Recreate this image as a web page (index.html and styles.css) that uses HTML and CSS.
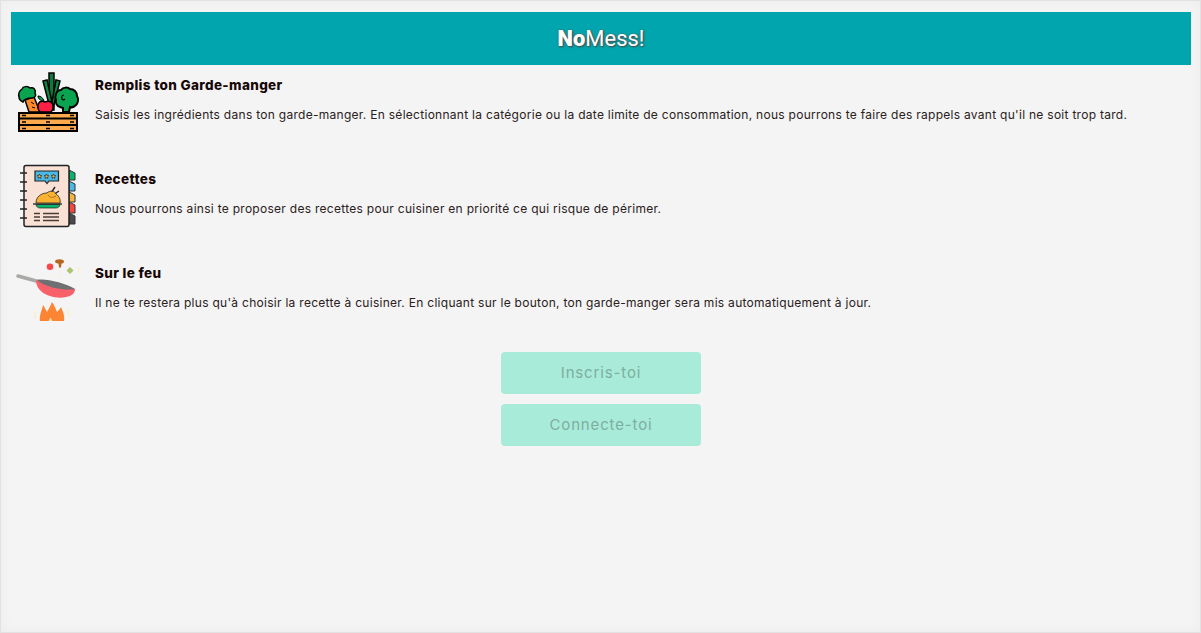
FILE: index.html
```html
<!DOCTYPE html>
<html lang="fr">

<head>
    <meta charset="utf-8">
    <meta name="viewport" content="width=device-width, initial-scale=1.0">

    <title>NoMess!</title>

    <link rel="stylesheet" href="styles.css">

</head>

<body>
    <main class="cadre">
        <header class="entete">
            <h1><b>No</b>Mess!</h1>
        </header>

        <section class="etapes">
            <article class="etape">
                <svg class="icone" viewBox="16 70 64 64">
                    <!-- poireau -->
                    <path d="M49 110V73h5v37z" fill="#0d7a3e" stroke="#000" stroke-width="1.5"/>
                    <path d="M50 108L43 81l4-1 5 22M53 108l7-27-4-1-4 22" fill="#0a8c46" stroke="#000" stroke-width="1.5"/>
                    <!-- carotte -->
                    <path d="M25 100l9-3 6 15H29z" fill="#ff8a2b" stroke="#000" stroke-width="1.5"/>
                    <path d="M19 97c-1-4 0-6 3-8 1-3 6-3 8-1 4-1 6 2 5 5 2 3-1 5-3 5-4 0-8 1-9 4-2-1-4-3-4-5z" fill="#0aa350" stroke="#000" stroke-width="1.500"/>
                    <path d="M31 102l3 2M32 107l3 1" stroke="#000" stroke-width="1" fill="none"/>
                    <!-- pomme -->
                    <path d="M45 102c4-2 8 0 8 4 0 3-1 6-3 6H41c-2 0-3-3-3-6 0-4 3-6 7-4z" fill="#ff1f46" stroke="#000" stroke-width="1.500"/>
                    <path d="M44 101c-1-3-3-5-6-5 0 3 3 5 6 5z" fill="#0aa350" stroke="#000" stroke-width="1"/>
                    <!-- brocoli -->
                    <path d="M63 112v-4l-3-1c-3-1-5-4-4-7-1-2-1-4 0-6 1-3 3-4 5-4 2-3 7-3 9-1 4 0 7 3 7 7 2 3 1 7-1 9-2 2-4 3-6 2l-1 5z" fill="#0aa350" stroke="#000" stroke-width="2"/>
                    <path d="M64 95c-2 0-3 2-2 4 1 1 2 1 3 0" stroke="#000" stroke-width="1.200" fill="none"/>
                    <!-- cagette -->
                    <path d="M19 113h58v18H19z" fill="#ffa94d" stroke="#000" stroke-width="2"/>
                    <path d="M19 118.500h58M19 125h58" stroke="#000" stroke-width="2"/>
                    <path d="M22 115.500h4M46 115.500h4M70 115.500h4M22 122h4M46 122h4M70 122h4M22 128.500h4M46 128.500h4M70 128.500h4" stroke="#000" stroke-width="1.600"/>
                </svg>
                <div class="texte">
                    <h2>Remplis ton Garde-manger</h2>
                    <p>Saisis les ingrédients dans ton garde-manger. En sélectionnant la catégorie ou la date limite de consommation, nous pourrons te faire des rappels avant qu'il ne soit trop tard.</p>
                </div>
            </article>

            <article class="etape">
                <svg class="icone" viewBox="16 164 64 64">
                    <!-- onglets -->
                    <path d="M69 170l6 3v7l-6 0z" fill="#0cb36b" stroke="#333" stroke-width="1"/>
                    <path d="M69 181l6 3v7l-6 0z" fill="#4cb8e6" stroke="#333" stroke-width="1"/>
                    <path d="M69 192l6 3v7l-6 0z" fill="#f5b342" stroke="#333" stroke-width="1"/>
                    <path d="M69 202l6 3v8l-6 0z" fill="#f5483f" stroke="#333" stroke-width="1"/>
                    <path d="M69 213l6 3v8l-6 0z" fill="#4a4a4a" stroke="#333" stroke-width="1"/>
                    <!-- carnet -->
                    <rect x="24" y="165.500" width="45" height="61" rx="2" fill="#f9e1d6" stroke="#222" stroke-width="1.500"/>
                    <path d="M20 173h7M20 182h7M20 191h7M20 200h7M20 209h7M20 218h7" stroke="#222" stroke-width="1.300"/>
                    <!-- bulle -->
                    <path d="M35 171h23.500v10h-9.500l-2 2.500-2-2.500H35z" fill="#4cb8e6" stroke="#222" stroke-width="1.200"/>
                    <path d="M39.500 174l.7 1.500 1.600.2-1.200 1.100.3 1.600-1.400-.8-1.400.8.300-1.600-1.200-1.100 1.600-.2zM46.500 174l.7 1.500 1.600.2-1.200 1.100.3 1.600-1.400-.8-1.400.8.300-1.600-1.200-1.100 1.600-.2zM53.500 174l.7 1.500 1.600.2-1.200 1.100.3 1.600-1.400-.8-1.400.8.300-1.600-1.200-1.100 1.600-.2z" fill="#f5b342" stroke="#222" stroke-width=".7"/>
                    <!-- poulet -->
                    <path d="M51 193l4-6M53 195l6-4" stroke="#222" stroke-width="1.400" fill="none"/>
                    <path d="M36 203c0-6 5-10 11-10 3-3 8-2 9 1 3 2 5 6 4 9z" fill="#f9b233" stroke="#222" stroke-width=".8"/>
                    <path d="M48 195c2 3 5 3 8 1" stroke="#a8701a" stroke-width="1" fill="none"/>
                    <path d="M36 204.500h24c0 2-2 3.500-4 3.500H40c-2 0-4-1.500-4-3.500z" fill="#0cb36b" stroke="#222" stroke-width=".7"/>
                    <path d="M33 204h29" stroke="#222" stroke-width="1.300"/>
                    <!-- lignes -->
                    <path d="M34 213.500h6M34 217h6M34 220.500h6M43 213.500h16M43 217h16M43 220.500h16" stroke="#4a3d38" stroke-width="1.300"/>
                </svg>
                <div class="texte">
                    <h2>Recettes</h2>
                    <p>Nous pourrons ainsi te proposer des recettes pour cuisiner en priorité ce qui risque de périmer.</p>
                </div>
            </article>

            <article class="etape">
                <svg class="icone" viewBox="16 258 64 64">
                    <!-- ingredients -->
                    <circle cx="50" cy="266.700" r="3.300" fill="#f9484a"/>
                    <path d="M55 261.500c0-3 9-3 9 0 0 1.500-1.500 2-2.500 2l-.5 4h-2l-.5-4c-1 0-3.500-.5-3.500-2z" fill="#b5651d"/>
                    <path d="M70 267l3.500 3.500-3.500 3.500-3.500-3.500z" fill="#a9c46c"/>
                    <path d="M60 271v1.500M60 275v2.500M50 273.500v1.500M78 267c1 1 1 4 0 6" stroke="#fbeec9" stroke-width="1.500" fill="none"/>
                    <!-- poele -->
                    <path d="M18 276l20 5.500" stroke="#aaa9a7" stroke-width="3.500" stroke-linecap="round"/>
                    <path d="M36 280l39 9c0 4-3 7-9 8-8 2-19-1-24-5-4-3-6-7-6-12z" fill="#f8606a"/>
                    <path d="M37 280c8-2 28 3 38 9-7 2-30-1-38-9z" fill="#6f7072"/>
                    <!-- feu -->
                    <path d="M40 321c-1-5 2-11 3-16 2 3 3 5 4 7 2-4 4-7 5-10 3 4 4 8 5 10 1-1 3-3 4-5 2 5 4 9 3 14z" fill="#fb8532"/>
                    <path d="M48.500 321l2-3.500 2 3.500z" fill="#fbd7b0"/>
                    <path d="M41 302v1M35 311c-1 3 0 6 1 8M67 310c2 2 2 4 2 7M67 320v1" stroke="#fbeec9" stroke-width="1.500" fill="none"/>
                </svg>
                <div class="texte">
                    <h2>Sur le feu</h2>
                    <p>Il ne te restera plus qu'à choisir la recette à cuisiner. En cliquant sur le bouton, ton garde-manger sera mis automatiquement à jour.</p>
                </div>
            </article>
        </section>

        <div class="boutons">
            <button class="bouton">Inscris-toi</button>
            <button class="bouton">Connecte-toi</button>
        </div>
    </main>
</body>

</html>
```

FILE: styles.css
```css
* {
    box-sizing: border-box;
}

html,
body {
    height: 100%;
    margin: 0;
}

body {
    background: #f4f4f4;
    font-family: "Inter", "Liberation Sans", sans-serif;
    color: #170808;
}

.cadre {
    height: 100%;
    padding: 10px 9px 0 10px;
    border: 1px solid #e2e2e2;
    box-shadow: inset 0 0 12px #ececec;
}

.entete {
    height: 53px;
    margin-top: 1px;
    display: flex;
    align-items: center;
    justify-content: center;
    background: #00a5ad;
}

.entete h1 {
    margin: 0;
    font-family: "Roboto", sans-serif;
    font-size: 22px;
    font-weight: 400;
    color: #fff;
    text-shadow: 1px 1px 2px #444, 0 0 2px #666;
}

.entete b {
    font-weight: 900;
}

.etapes {
    margin-top: 5px;
    padding-left: 5px;
}

.etape {
    display: flex;
    gap: 15px;
    height: 94px;
}

.icone {
    flex: none;
    width: 64px;
    height: 64px;
}

.texte h2 {
    margin: 7px 0 0;
    font-size: 13.500px;
    line-height: 16px;
    font-weight: 800;
    letter-spacing: .35px;
}

.texte p {
    margin: 14px 0 0;
    font-size: 12px;
    line-height: 16px;
    letter-spacing: .28px;
    color: #2a2020;
}

.boutons {
    display: flex;
    flex-direction: column;
    align-items: center;
    gap: 10px;
}

.bouton {
    width: 200px;
    height: 42px;
    padding: 0 0 2px;
    border: 0;
    border-radius: 4px;
    background: #a8ebd9;
    color: #7fae9f;
    font-family: "Inter", sans-serif;
    font-size: 15px;
    letter-spacing: .85px;
}
```
